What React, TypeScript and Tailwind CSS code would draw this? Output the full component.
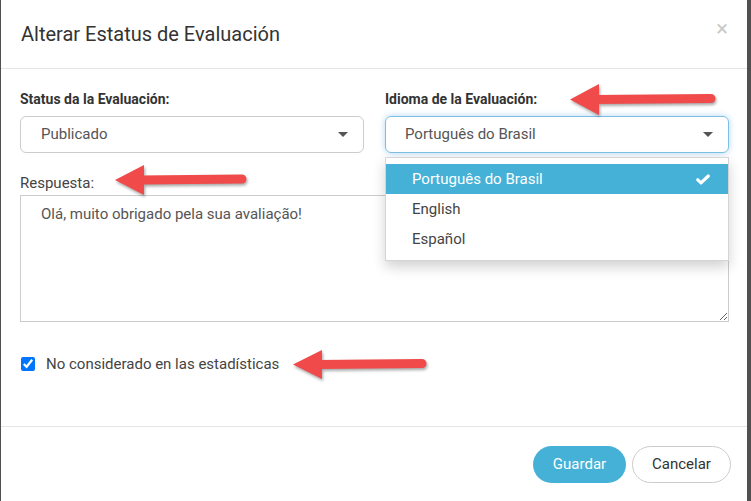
import React from "react"

const font = { fontFamily: "Roboto, 'Liberation Sans', sans-serif" }

function Caret() {
  return (
    <svg width="10" height="5" viewBox="0 0 10 5" className="shrink-0">
      <polygon points="0,0 10,0 5,5" fill="#555" />
    </svg>
  )
}

function Arrow({ x, y, w, h }: { x: number; y: number; w: number; h: number }) {
  const head = 29
  const mid = h / 2
  return (
    <svg
      width={w + 4}
      height={h + 4}
      viewBox={`0 0 ${w + 4} ${h + 4}`}
      className="absolute drop-shadow-[1px_2px_1.5px_rgba(0,0,0,0.35)]"
      style={{ left: x, top: y }}
    >
      <polygon points={`0,${mid} ${head},0 ${head},${h}`} fill="#f04a4a" />
      <line x1={head - 4} y1={mid} x2={w - 5} y2={mid - 1} stroke="#f04a4a" strokeWidth="9" strokeLinecap="round" />
    </svg>
  )
}

export default function App() {
  return (
    <div className="relative w-[751px] h-[501px] bg-[#505050] overflow-hidden" style={font}>
      <div className="ml-[1px] w-[746px] h-full bg-white flex flex-col">

        {/* HEADER */}
        <div className="h-[69px] border-b border-[#e5e5e5] flex items-center justify-between pl-[20px] pr-[19px]">
          <h4 className="text-[20px] text-[#333]">Alterar Estatus de Evaluación</h4>
          <span className="text-[22px] leading-none text-[#c8c8c8] -mt-[10px]">×</span>
        </div>

        {/* BODY */}
        <div className="h-[357px] pt-[20px] pl-[19px] w-[728px]">
          <div className="grid grid-cols-2 gap-x-[21px]">
            <div>
              <div className="text-[14px] font-bold leading-[20px] text-[#333] mb-[7px]">Status da la Evaluación:</div>
              <div className="h-[37px] border border-[#ccc] rounded-[6px] flex items-center justify-between pl-[20px] pr-[15px] text-[15px] text-[#555]">
                <span>Publicado</span>
                <Caret />
              </div>
            </div>
            <div className="relative">
              <div className="text-[14px] font-bold leading-[20px] text-[#333] mb-[7px]">Idioma de la Evaluación:</div>
              <div className="h-[37px] border border-[#7dbfe3] rounded-[6px] shadow-[0_0_6px_rgba(102,175,233,0.5)] flex items-center justify-between pl-[19px] pr-[15px] text-[15px] text-[#555]">
                <span>Português do Brasil</span>
                <Caret />
              </div>

              {/* DROPDOWN */}
              <div className="absolute left-0 right-0 top-[68px] z-10 bg-white border border-[#d5d5d5] shadow-[0_6px_12px_rgba(0,0,0,0.18)] pt-[6px] pb-[6px] text-[15px]">
                <div className="h-[30px] bg-[#45b1d7] text-white flex items-center justify-between pl-[26px] pr-[18px]">
                  <span>Português do Brasil</span>
                  <svg width="14" height="11" viewBox="0 0 14 11">
                    <path d="M1.8 5.8 L5 8.8 L12.3 2" fill="none" stroke="#fff" strokeWidth="3.2" strokeLinejoin="round" strokeLinecap="round" />
                  </svg>
                </div>
                <div className="h-[30px] flex items-center pl-[26px] text-[#444]">English</div>
                <div className="h-[30px] flex items-center pl-[26px] text-[#444]">Español</div>
              </div>
            </div>
          </div>

          <div className="mt-[20px] text-[15px] leading-[20px] text-[#444] mb-[2px]">Respuesta:</div>
          <textarea
            readOnly
            defaultValue="Olá, muito obrigado pela sua avaliação!"
            className="block w-full h-[127px] border border-[#ccc] pt-[8px] px-[20px] text-[15px] leading-[20px] text-[#555] outline-none"
          />

          <label className="mt-[32px] h-[20px] flex items-center gap-[11px] text-[15px] text-[#444]">
            <input type="checkbox" defaultChecked className="w-[14px] h-[14px] m-0 ml-[1px] accent-[#0075ff]" />
            <span>No considerado en las estadísticas</span>
          </label>
        </div>

        {/* FOOTER */}
        <div className="border-t border-[#e5e5e5] pt-[19px] pr-[16px] flex justify-end gap-[6px]">
          <button className="w-[93px] h-[37px] rounded-full bg-[#46b1d7] text-white text-[15px]">Guardar</button>
          <button className="w-[99px] h-[37px] rounded-full border border-[#ccc] bg-white text-[#333] text-[15px]">Cancelar</button>
        </div>
      </div>

      {/* ARROWS */}
      <Arrow x={570} y={84} w={146} h={31} />
      <Arrow x={115} y={165} w={132} h={30} />
      <Arrow x={293} y={350} w={134} h={29} />
    </div>
  )
}
